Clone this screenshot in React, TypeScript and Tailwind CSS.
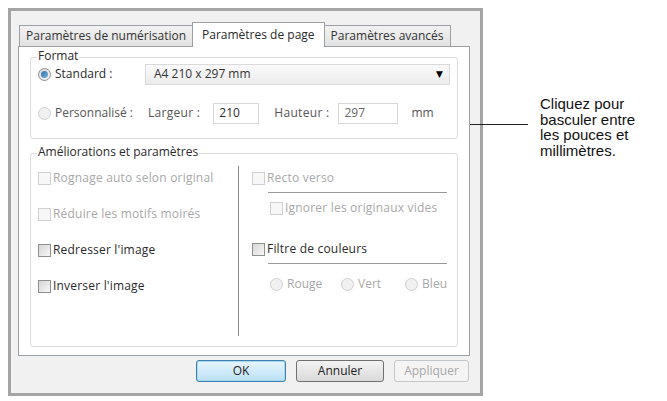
import React from "react"

const ui = { fontFamily: '"Open Sans", "DejaVu Sans", sans-serif' }

function Radio({ checked, disabled }: { checked?: boolean; disabled?: boolean }) {
  return (
    <span
      className={`inline-flex items-center justify-center w-[13px] h-[13px] rounded-full border shrink-0 ${
        disabled ? "border-[#cfcfcf] bg-[#f0f0f0]" : "border-[#8e8f8f] bg-gradient-to-br from-[#d8d8d8] to-[#f6f6f6]"
      }`}
    >
      {checked && <span className="w-[7px] h-[7px] rounded-full bg-gradient-to-br from-[#2a6fa8] to-[#7ab8e0]" />}
    </span>
  )
}

function Check({ disabled }: { disabled?: boolean }) {
  return (
    <span
      className={`inline-block w-[13px] h-[13px] border shrink-0 ${
        disabled ? "border-[#d0d0d0] bg-[#f7f7f7]" : "border-[#8e8f8f] bg-gradient-to-br from-[#d6d6d6] to-[#f7f7f7]"
      }`}
    />
  )
}

function CheckRow({ label, disabled }: { label: string; disabled?: boolean }) {
  return (
    <div className="flex items-center gap-[2px] h-[20px] whitespace-nowrap">
      <Check disabled={disabled} />
      <span className={`tracking-[0.2px] ${disabled ? "text-[#a8a8a8]" : "text-[#2a2a2a]"}`}>{label}</span>
    </div>
  )
}

function Tab({ label, active }: { label: string; active?: boolean }) {
  return (
    <div
      className={
        active
          ? "h-[25px] px-[9px] border border-b-0 border-[#9aa0a4] bg-white flex items-center -mb-px relative z-10 -mx-px"
          : "h-[21px] px-[6px] border border-b-0 border-[#9aa0a4] bg-gradient-to-b from-[#f2f2f2] to-[#e2e2e2] flex items-center text-[#333]"
      }
    >
      {label}
    </div>
  )
}

export default function App() {
  return (
    <div className="w-[667px] h-[401px] bg-white relative" style={ui}>
      <div className="flex items-start pt-[8px] pl-[8px]">
        {/* dialog */}
        <div className="w-[475px] h-[388px] border-[3px] border-[#a4a4a4] bg-[#f1f1f1] text-[12px] leading-[16px] text-[#2a2a2a] flex flex-col">
          <div className="flex-1 flex flex-col px-[7px] pt-[10px]">
            <div className="flex items-end pl-[1px] h-[25px]">
              <Tab label="Paramètres de numérisation" />
              <Tab label="Paramètres de page" active />
              <Tab label="Paramètres avancés" />
            </div>
            <div className="w-[452px] h-[310px] bg-white border border-[#9aa0a4] px-[11px] pt-[3px] flex flex-col">
              {/* Format */}
              <div className="relative border border-[#dcdcdc] rounded-[3px] mt-[7px] h-[82px] px-[7px] pt-[2px]">
                <span className="absolute -top-[10px] left-[6px] bg-white px-[1px] text-[#2a2a2a]">Format</span>
                <div className="flex items-center h-[24px] mt-[2px]">
                  <div className="flex items-center gap-[4px] w-[107px]">
                    <Radio checked />
                    <span>Standard :</span>
                  </div>
                  <div className="flex-1 h-[21px] border border-[#dadada] bg-gradient-to-b from-[#fafafa] to-[#ececec] flex items-center pl-[8px] pr-[6px] text-[#333]">
                    <span className="flex-1">A4 210 x 297 mm</span>
                    <span className="text-[9px] text-black">▼</span>
                  </div>
                </div>
                <div className="flex items-center h-[26px] mt-[14px]">
                  <div className="flex items-center gap-[4px] w-[110px]">
                    <Radio disabled />
                    <span className="text-[#555]">Personnalisé :</span>
                  </div>
                  <span className="text-[#555] tracking-[0.3px]">Largeur :</span>
                  <div className="ml-[13px] w-[46px] h-[21px] border border-[#d8d8d8] bg-white flex items-center pl-[5px]">210</div>
                  <span className="ml-[15px] text-[#555] tracking-[0.3px]">Hauteur :</span>
                  <div className="ml-[9px] w-[60px] h-[21px] border border-[#d8d8d8] bg-white flex items-center pl-[5px] text-[#666]">297</div>
                  <span className="ml-[13px] text-[#555]">mm</span>
                </div>
              </div>
              {/* Améliorations */}
              <div className="relative border border-[#dcdcdc] rounded-[3px] mt-[14px] h-[194px] flex">
                <span className="absolute -top-[10px] left-[6px] bg-white px-[1px] text-[#2a2a2a]">Améliorations et paramètres</span>
                <div className="w-[207px] shrink-0 pl-[7px] pt-[14px] flex flex-col gap-[16px]">
                  <CheckRow label="Rognage auto selon original" disabled />
                  <CheckRow label="Réduire les motifs moirés" disabled />
                  <CheckRow label="Redresser l'image" />
                  <CheckRow label="Inverser l'image" />
                </div>
                <div className="w-px shrink-0 bg-[#8a8a8a] mt-[12px] mb-[10px]" />
                <div className="flex-1 min-w-0 pl-[13px] pr-[10px] pt-[14px] flex flex-col">
                  <CheckRow label="Recto verso" disabled />
                  <div className="ml-[16px] h-px bg-[#9a9a9a] mt-[4px]" />
                  <div className="ml-[18px] mt-[5px]">
                    <CheckRow label="Ignorer les originaux vides" disabled />
                  </div>
                  <div className="mt-[21px]">
                    <CheckRow label="Filtre de couleurs" />
                  </div>
                  <div className="ml-[16px] h-px bg-[#9a9a9a] mt-[4px]" />
                  <div className="flex items-center mt-[12px] ml-[18px] text-[#a8a8a8]">
                    <div className="flex items-center gap-[4px] w-[72px]">
                      <Radio disabled />
                      <span>Rouge</span>
                    </div>
                    <div className="flex items-center gap-[4px] w-[65px]">
                      <Radio disabled />
                      <span>Vert</span>
                    </div>
                    <div className="flex items-center gap-[4px]">
                      <Radio disabled />
                      <span>Bleu</span>
                    </div>
                  </div>
                </div>
              </div>
            </div>
            {/* buttons */}
            <div className="flex justify-end gap-[10px] mt-[4px] pr-[4px]">
              <button className="w-[90px] h-[22px] rounded-[3px] border border-[#3c7fb1] bg-gradient-to-b from-[#e8f6fd] to-[#b9e0f5] shadow-[inset_0_0_0_1px_#a8d8f0] text-[#222]">
                OK
              </button>
              <button className="w-[88px] h-[22px] rounded-[3px] border border-[#707070] bg-gradient-to-b from-[#f4f4f4] to-[#d9d9d9] text-[#222]">
                Annuler
              </button>
              <button className="w-[75px] h-[22px] rounded-[3px] border border-[#c4c7c9] bg-[#f4f4f4] text-[#a8a8a8]">
                Appliquer
              </button>
            </div>
          </div>
        </div>
        {/* callout text */}
        <div
          className="ml-[57px] mt-[88px] text-[15px] leading-[15.6px] text-[#111]"
          style={{ fontFamily: '"Liberation Sans", Arial, sans-serif' }}
        >
          Cliquez pour
          <br />
          basculer entre
          <br />
          les pouces et
          <br />
          millimètres.
        </div>
      </div>
      {/* callout leader line over the dialog edge */}
      <div className="absolute left-[470px] top-[124px] w-[58px] h-px bg-[#222]" />
    </div>
  )
}
